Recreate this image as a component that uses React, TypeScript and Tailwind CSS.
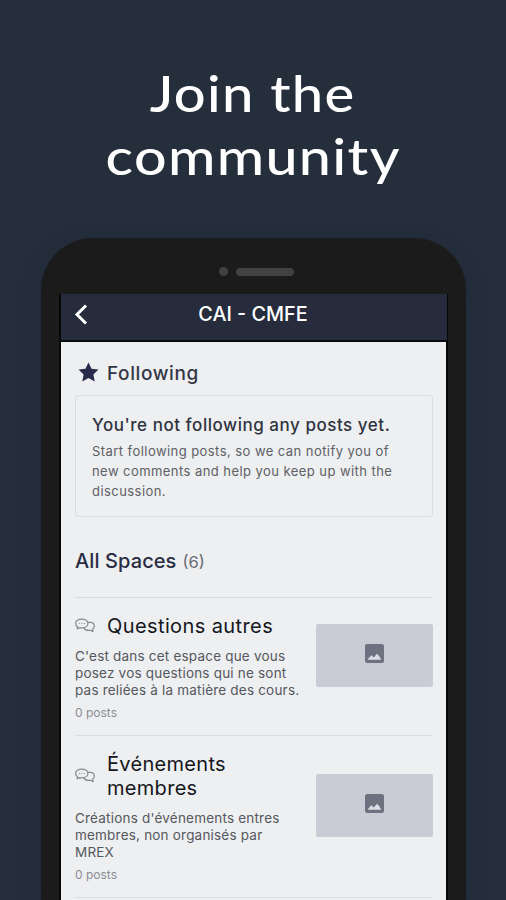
import React from "react";

function ChatIcon() {
  return (
    <svg className="w-5 h-4 shrink-0" viewBox="0 0 20 16" fill="none" stroke="#858991" strokeWidth="1.2" strokeLinecap="round" strokeLinejoin="round">
      <path d="M6.800 1.200C3.500 1.200.6 2.900.6 5.400c0 1.300.7 2.500 1.900 3.300L2.200 10.900l2.500-1.300c.7.2 1.400.2 2.100.2 3.400 0 6.100-1.900 6.100-4.400S10.200 1.200 6.800 1.200Z" />
      <path d="M13.500 4.300h2.300c2.100.3 3.500 1.800 3.500 3.700 0 1.300-.6 2.400-1.600 3.100l.4 2.500-2.600-1.300c-3 .5-5.500-.3-6.500-2.200" />
      <path d="M4.200 5.500h.1M6.800 5.500h.1M9.400 5.500h.1" />
    </svg>
  );
}

function Thumbnail() {
  return (
    <div className="flex h-[63px] w-[117px] shrink-0 items-center justify-center rounded-[2px] bg-[#c9ccd5] pb-[4px]">
      <svg className="h-[19px] w-[19px]" viewBox="0 0 19 19">
        <rect width="19" height="19" rx="2.200" fill="#6e7180" />
        <path d="M3 15.800V15L6.400 11.200l2.400 2.200L12 9.800l2.400 2.400 1.800 3.600Z" fill="#dadce3" />
      </svg>
    </div>
  );
}

function Lines({ items }: { items: string[] }) {
  return (
    <>
      {items.map((text) => (
        <div key={text} className="whitespace-nowrap">{text}</div>
      ))}
    </>
  );
}

export default function App() {
  return (
    <div className="flex h-[900px] w-[506px] flex-col overflow-hidden bg-[#252e3b] font-['Inter',sans-serif]">
      <h1 className="flex h-[238px] shrink-0 flex-col items-center pt-[61px] font-['Lato',sans-serif] text-[51px] font-medium leading-[63px] text-white">
        <span className="block origin-center scale-x-[1.1] whitespace-nowrap tracking-[1.2px]">Join the</span>
        <span className="block origin-center scale-x-[1.125] whitespace-nowrap tracking-[1.2px]">community</span>
      </h1>
      <div className="ml-[41px] flex w-[425px] grow flex-col rounded-t-[52px] bg-[#1b1b1b] pl-[18px] pr-[18px] shadow-[0_8px_24px_rgba(20,30,50,0.25)]">
        <div className="flex h-[56px] shrink-0 items-center gap-[8px] pl-[160px] pt-[11px]">
          <span className="h-[9px] w-[9px] rounded-full bg-[#414141]" />
          <span className="h-[8px] w-[58px] rounded-full bg-[#414141]" />
        </div>
        <div className="flex grow flex-col border-x-2 border-[#060606] bg-[#edeff1]">
          <header className="relative -mr-px flex h-[48px] shrink-0 items-center justify-center border-b-2 border-[#080a12] bg-[#262c3b] pb-[4px] pr-[2px] text-[19.8px] font-medium text-white">
            <svg className="absolute left-[12px] top-[10px] h-[21px] w-[16px]" viewBox="0 0 16 21" fill="none" stroke="#fff" strokeWidth="3">
              <path d="M13 1.500 4 10.500 13 19.500" />
            </svg>
            <span className="whitespace-nowrap">CAI - CMFE</span>
          </header>
          <main className="flex flex-col pl-[14px] pr-[13px]">
            <div className="flex h-[53px] items-center gap-[8px] pl-[3px] pt-[10px] text-[19px] font-medium tracking-[0.6px] text-[#272b40]">
              <svg className="mb-[3px] h-[21px] w-[21px]" viewBox="0 0 21 21" fill="#272b4a">
                <path d="m10.500.4 3 6.300 7 .9-5.100 4.900 1.300 7-6.200-3.400-6.200 3.400 1.300-7L.5 7.600l7-.9Z" />
              </svg>
              <span className="pt-[2px] text-[#343746]">Following</span>
            </div>
            <section className="h-[122px] rounded-[3px] border border-[#d9dcdf] pl-[16px] pt-[17px]">
              <div className="whitespace-nowrap text-[17px] font-medium leading-[24px] tracking-[0.53px] text-[#30333f]">You're not following any posts yet.</div>
              <div className="pt-[4px] text-[13px] leading-[20px] tracking-[0.44px] text-[#5d6066]">
                <Lines items={[
                  "Start following posts, so we can notify you of",
                  "new comments and help you keep up with the",
                  "discussion.",
                ]} />
              </div>
            </section>
            <div className="flex h-[81px] items-baseline gap-[6px] border-b border-[#d9dcdf] pt-[30px] font-medium">
              <span className="whitespace-nowrap text-[20px] leading-[28px] tracking-[0.1px] text-[#292c43]">All Spaces</span>
              <span className="text-[16.5px] font-normal text-[#666a72]">(6)</span>
            </div>
            <article className="flex h-[138px] justify-between border-b border-[#d9dcdf]">
              <div className="pt-[16px]">
                <div className="flex items-center gap-[12px] text-[20px] font-normal leading-[24px] tracking-[0.4px] text-[#15161b]">
                  <ChatIcon />
                  <span className="whitespace-nowrap">Questions autres</span>
                </div>
                <div className="pt-[10px] text-[13.5px] leading-[17px] tracking-[0.2px] text-[#55585e]">
                  <Lines items={[
                    "C'est dans cet espace que vous",
                    "posez vos questions qui ne sont",
                    "pas reliées à la matière des cours.",
                  ]} />
                </div>
                <div className="pt-[5px] text-[12px] leading-[18px] text-[#8b8e94]">0 posts</div>
              </div>
              <div className="pt-[26px]"><Thumbnail /></div>
            </article>
            <article className="flex h-[162px] justify-between border-b border-[#d9dcdf]">
              <div className="pt-[16px]">
                <div className="flex items-center gap-[12px] text-[20px] font-normal leading-[24px] tracking-[0.3px] text-[#15161b]">
                  <ChatIcon />
                  <span className="whitespace-nowrap">Événements<br />membres</span>
                </div>
                <div className="pt-[10px] text-[13.5px] leading-[17px] tracking-[0.2px] text-[#55585e]">
                  <Lines items={[
                    "Créations d'événements entres",
                    "membres, non organisés par",
                    "MREX",
                  ]} />
                </div>
                <div className="pt-[5px] text-[12px] leading-[18px] text-[#8b8e94]">0 posts</div>
              </div>
              <div className="pt-[38px]"><Thumbnail /></div>
            </article>
          </main>
        </div>
      </div>
    </div>
  );
}
